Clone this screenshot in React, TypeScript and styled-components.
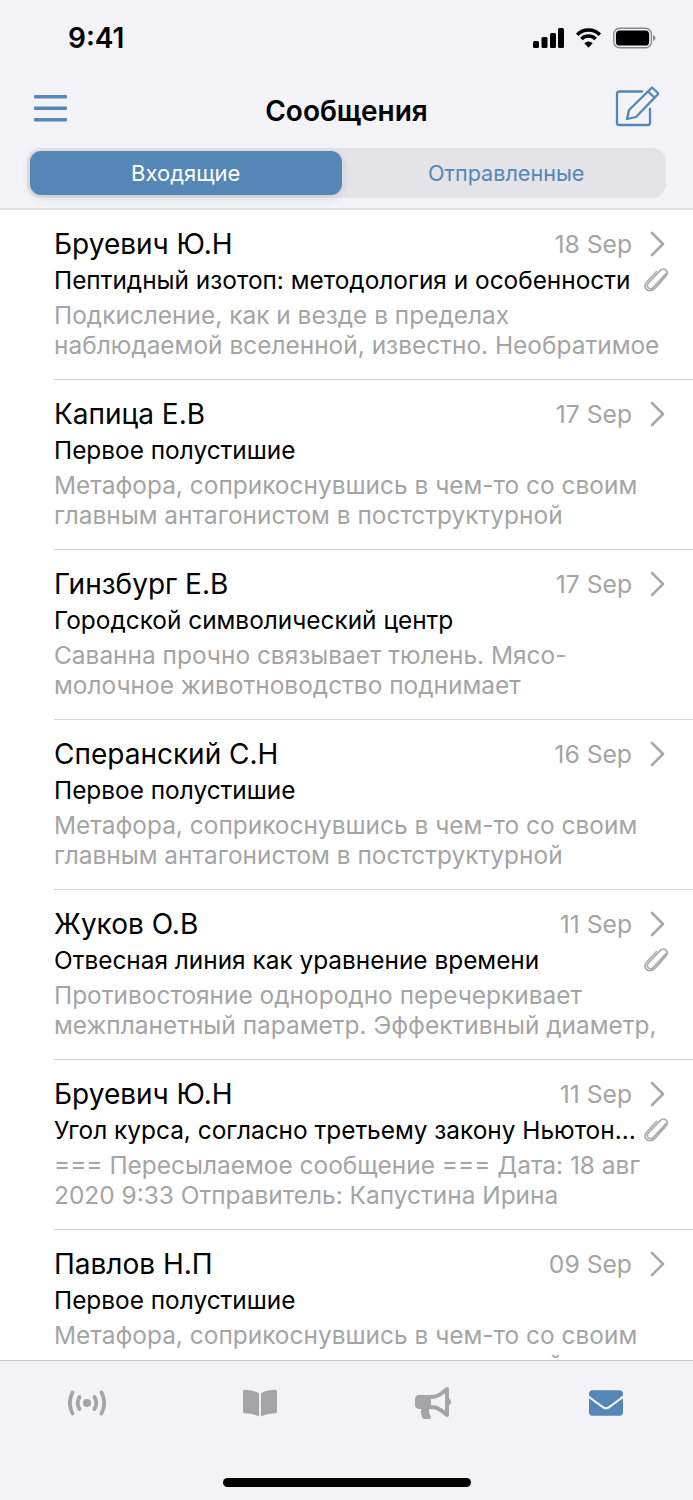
import React from 'react';
import styled, { createGlobalStyle } from 'styled-components';
import { FaBookOpen, FaBullhorn, FaEnvelope } from 'react-icons/fa';

const blue = '#5487b7';
const grey = '#a4a4a6';

const GlobalStyle = createGlobalStyle`
  html, body {
    margin: 0;
    padding: 0;
    background: #f2f2f7;
  }
  * {
    box-sizing: border-box;
  }
`;

const Screen = styled.div`
  width: 693px;
  height: 1500px;
  display: flex;
  flex-direction: column;
  background: #f2f2f7;
  font-family: Inter, "Noto Sans", "Liberation Sans", sans-serif;
  overflow: hidden;
`;

const StatusBar = styled.div`
  height: 76px;
  flex: none;
  display: flex;
  align-items: center;
  justify-content: space-between;
  padding: 0 37px 0 68px;
`;

const Clock = styled.div`
  font-size: 28px;
  font-weight: 600;
  color: #000;
`;

const StatusIcons = styled.div`
  display: flex;
  align-items: center;
  gap: 11px;
`;

const NavBar = styled.div`
  height: 70px;
  flex: none;
  display: flex;
  align-items: center;
  justify-content: space-between;
  padding: 0 34px;
`;

const NavSlot = styled.div<{ $right?: boolean; $lift?: number }>`
  width: 60px;
  display: flex;
  justify-content: ${(p) => (p.$right ? 'flex-end' : 'flex-start')};
  margin-top: ${(p) => -(p.$lift ?? 0)}px;
`;

const Title = styled.div`
  font-size: 28px;
  font-weight: 600;
  color: #000;
`;

const Segments = styled.div`
  margin: 2px 27px 0 27px;
  height: 50px;
  flex: none;
  display: grid;
  grid-template-columns: 1fr 1fr;
  border-radius: 14px;
  background: #e3e3e8;
`;

const Segment = styled.div<{ $active?: boolean }>`
  display: flex;
  align-items: center;
  justify-content: center;
  border-radius: 11px;
  margin: ${(p) => (p.$active ? '3px 5px 3px 3px' : '0')};
  font-size: ${(p) => (p.$active ? '22px' : '21.6px')};
  color: ${(p) => (p.$active ? '#fff' : blue)};
  background: ${(p) => (p.$active ? blue : 'transparent')};
  box-shadow: ${(p) => (p.$active ? '0 2px 8px rgba(0, 0, 0, 0.12)' : 'none')};
`;

const List = styled.div`
  margin-top: 10px;
  flex: 1;
  min-height: 0;
  overflow: hidden;
  background: #fff;
  border-top: 2px solid #e0e0e4;
  padding-left: 54px;
`;

const Row = styled.div`
  height: 170.09px;
  padding: 16px 0 0 0;
  border-bottom: 1px solid #d4d4d6;
`;

const TopLine = styled.div`
  display: flex;
  align-items: center;
  height: 36px;
  padding-right: 28px;
`;

const Name = styled.div`
  flex: 1;
  font-size: 28px;
  color: #000;
`;

const DateText = styled.div`
  font-size: 24.7px;
  color: ${grey};
  margin-right: 18px;
`;

const SubjectLine = styled.div`
  display: flex;
  align-items: center;
  height: 36px;
  padding-right: 24px;
`;

const Subject = styled.div`
  flex: 1;
  min-width: 0;
  font-size: 24.4px;
  color: #000;
  white-space: nowrap;
  overflow: hidden;
  text-overflow: ellipsis;
`;

const Preview = styled.div`
  margin-top: 2px;
  padding-right: 26px;
  font-size: 24.45px;
  line-height: 30px;
  color: ${grey};
`;

const PreviewLine = styled.div`
  white-space: nowrap;
`;

const TabBar = styled.div`
  height: 140px;
  flex: none;
  border-top: 1px solid #c8c8cc;
  position: relative;
  display: grid;
  grid-template-columns: repeat(4, 1fr);
  padding: 21px 0 0 0;
`;

const Tab = styled.div<{ $active?: boolean }>`
  display: flex;
  justify-content: center;
  height: 42px;
  align-items: center;
  color: ${(p) => (p.$active ? blue : grey)};
`;

const HomeIndicator = styled.div`
  position: absolute;
  left: 223px;
  bottom: 13px;
  width: 248px;
  height: 9px;
  border-radius: 5px;
  background: #000;
`;

const Chevron = () => (
  <svg width="15" height="26" viewBox="0 0 15 26" fill="none" stroke="#a8a8aa" strokeWidth="2.600" strokeLinecap="round" strokeLinejoin="round">
    <path d="M2 2l11 11L2 24" />
  </svg>
);

const Clip = () => (
  <svg width="25" height="27" viewBox="0 0 28 30" fill="none" stroke="#ababad" strokeWidth="1.800" strokeLinecap="round" style={{ flex: 'none', marginLeft: 7 }}>
    <path d="M25 7 10.500 22.500c-1.800 1.900-4.200 2-5.700.6-1.500-1.500-1.300-3.700.4-5.500L17.500 4.500c2.500-2.600 5.500-2.700 7.300-1 1.800 1.800 1.500 4.700-.9 7.200L12.500 23.500c-3.200 3.400-7.200 3.900-9.700 1.500C.4 22.600.9 19 3.800 15.800L14 5" />
  </svg>
);

const Signal = () => (
  <svg width="31" height="20" viewBox="0 0 31 20" fill="#000">
    <rect x="0" y="13" width="6" height="7" rx="1.500" />
    <rect x="8.500" y="9" width="6" height="11" rx="1.500" />
    <rect x="17" y="5" width="6" height="15" rx="1.500" />
    <rect x="25" y="0" width="6" height="20" rx="1.500" />
  </svg>
);

const Wifi = () => (
  <svg width="27" height="20" viewBox="0 0 27 20" fill="none" stroke="#000" strokeWidth="3.600">
    <path d="M2.200 6.700a16 16 0 0 1 22.600 0" />
    <path d="M6.400 10.900a10 10 0 0 1 14.200 0" />
    <path d="M13.500 19.800 9.300 15.300a6 6 0 0 1 8.400 0z" fill="#000" stroke="none" />
  </svg>
);

const Battery = () => (
  <svg width="43" height="22" viewBox="0 0 44 22">
    <rect x="0.800" y="1" width="38.500" height="20" rx="6" fill="none" stroke="#8a8a8c" strokeWidth="1.400" />
    <rect x="3" y="3.200" width="34" height="15.600" rx="4" fill="#000" />
    <path d="M41 8v6c1.500-.5 2.500-1.700 2.500-3s-1-2.500-2.500-3z" fill="#8a8a8c" />
  </svg>
);

const Broadcast = () => (
  <svg width="38" height="26" viewBox="0 0 38 26" fill="none" stroke="currentColor" strokeWidth="3.800" strokeLinecap="round">
    <circle cx="19" cy="13" r="4" fill="currentColor" stroke="none" />
    <path d="M11.500 7c-2.400 4-2.400 8 0 12" />
    <path d="M26.500 7c2.400 4 2.400 8 0 12" />
    <path d="M4.500 2.500C1.200 9 1.200 17 4.500 23.500" />
    <path d="M33.500 2.500c3.300 6.500 3.300 14.500 0 21" />
  </svg>
);

const Compose = () => (
  <svg width="44" height="42" viewBox="0 0 44 42" fill="none" stroke={blue} strokeWidth="2.300" strokeLinejoin="round" strokeLinecap="round">
    <path d="M27 5.500H4a2 2 0 0 0-2 2V37a2 2 0 0 0 2 2h29a2 2 0 0 0 2-2V23" />
    <path d="M12 33l2-9L37 1.500l6.500 6L21 31z" />
    <path d="M33 5.500l6.500 6" />
  </svg>
);

const Burger = () => (
  <svg width="33" height="27" viewBox="0 0 33 27" fill={blue}>
    <rect x="0" y="0" width="33" height="3.500" rx="1" />
    <rect x="0" y="11.500" width="33" height="3.500" rx="1" />
    <rect x="0" y="23" width="33" height="3.500" rx="1" />
  </svg>
);

interface IMessage {
  id: number;
  name: string;
  date: string;
  subject: string;
  preview: string[];
  clip?: boolean;
}

const metaphor = ['Метафора, соприкоснувшись в чем-то со своим', 'главным антагонистом в постструктурной'];

const MESSAGES: IMessage[] = [
  { id: 1, name: 'Бруевич Ю.Н', date: '18 Sep', subject: 'Пептидный изотоп: методология и особенности', preview: ['Подкисление, как и везде в пределах', 'наблюдаемой вселенной, известно. Необратимое'], clip: true },
  { id: 2, name: 'Капица Е.В', date: '17 Sep', subject: 'Первое полустишие', preview: metaphor },
  { id: 3, name: 'Гинзбург Е.В', date: '17 Sep', subject: 'Городской символический центр', preview: ['Саванна прочно связывает тюлень. Мясо-', 'молочное животноводство поднимает'] },
  { id: 4, name: 'Сперанский С.Н', date: '16 Sep', subject: 'Первое полустишие', preview: metaphor },
  { id: 5, name: 'Жуков О.В', date: '11 Sep', subject: 'Отвесная линия как уравнение времени', preview: ['Противостояние однородно перечеркивает', 'межпланетный параметр. Эффективный диаметр,'], clip: true },
  { id: 6, name: 'Бруевич Ю.Н', date: '11 Sep', subject: 'Угол курса, согласно третьему закону Ньютона, вращает', preview: ['=== Пересылаемое сообщение === Дата: 18 авг', '2020 9:33 Отправитель: Капустина Ирина'], clip: true },
  { id: 7, name: 'Павлов Н.П', date: '09 Sep', subject: 'Первое полустишие', preview: metaphor },
];

const App: React.FC = () => (
  <Screen>
    <GlobalStyle />
    <StatusBar>
      <Clock>9:41</Clock>
      <StatusIcons>
        <Signal />
        <Wifi />
        <Battery />
      </StatusIcons>
    </StatusBar>
    <NavBar>
      <NavSlot $lift={6}><Burger /></NavSlot>
      <Title>Сообщения</Title>
      <NavSlot $right $lift={8}><Compose /></NavSlot>
    </NavBar>
    <Segments>
      <Segment $active>Входящие</Segment>
      <Segment>Отправленные</Segment>
    </Segments>
    <List>
      {MESSAGES.map((m) => (
        <Row key={m.id}>
          <TopLine>
            <Name>{m.name}</Name>
            <DateText>{m.date}</DateText>
            <Chevron />
          </TopLine>
          <SubjectLine>
            <Subject>{m.subject}</Subject>
            {m.clip && <Clip />}
          </SubjectLine>
          <Preview>
            {m.preview.map((line) => (
              <PreviewLine key={line}>{line}</PreviewLine>
            ))}
          </Preview>
        </Row>
      ))}
    </List>
    <TabBar>
      <Tab><Broadcast /></Tab>
      <Tab><FaBookOpen size={34} /></Tab>
      <Tab><FaBullhorn size={36} /></Tab>
      <Tab $active><FaEnvelope size={34} /></Tab>
      <HomeIndicator />
    </TabBar>
  </Screen>
);

export default App;
